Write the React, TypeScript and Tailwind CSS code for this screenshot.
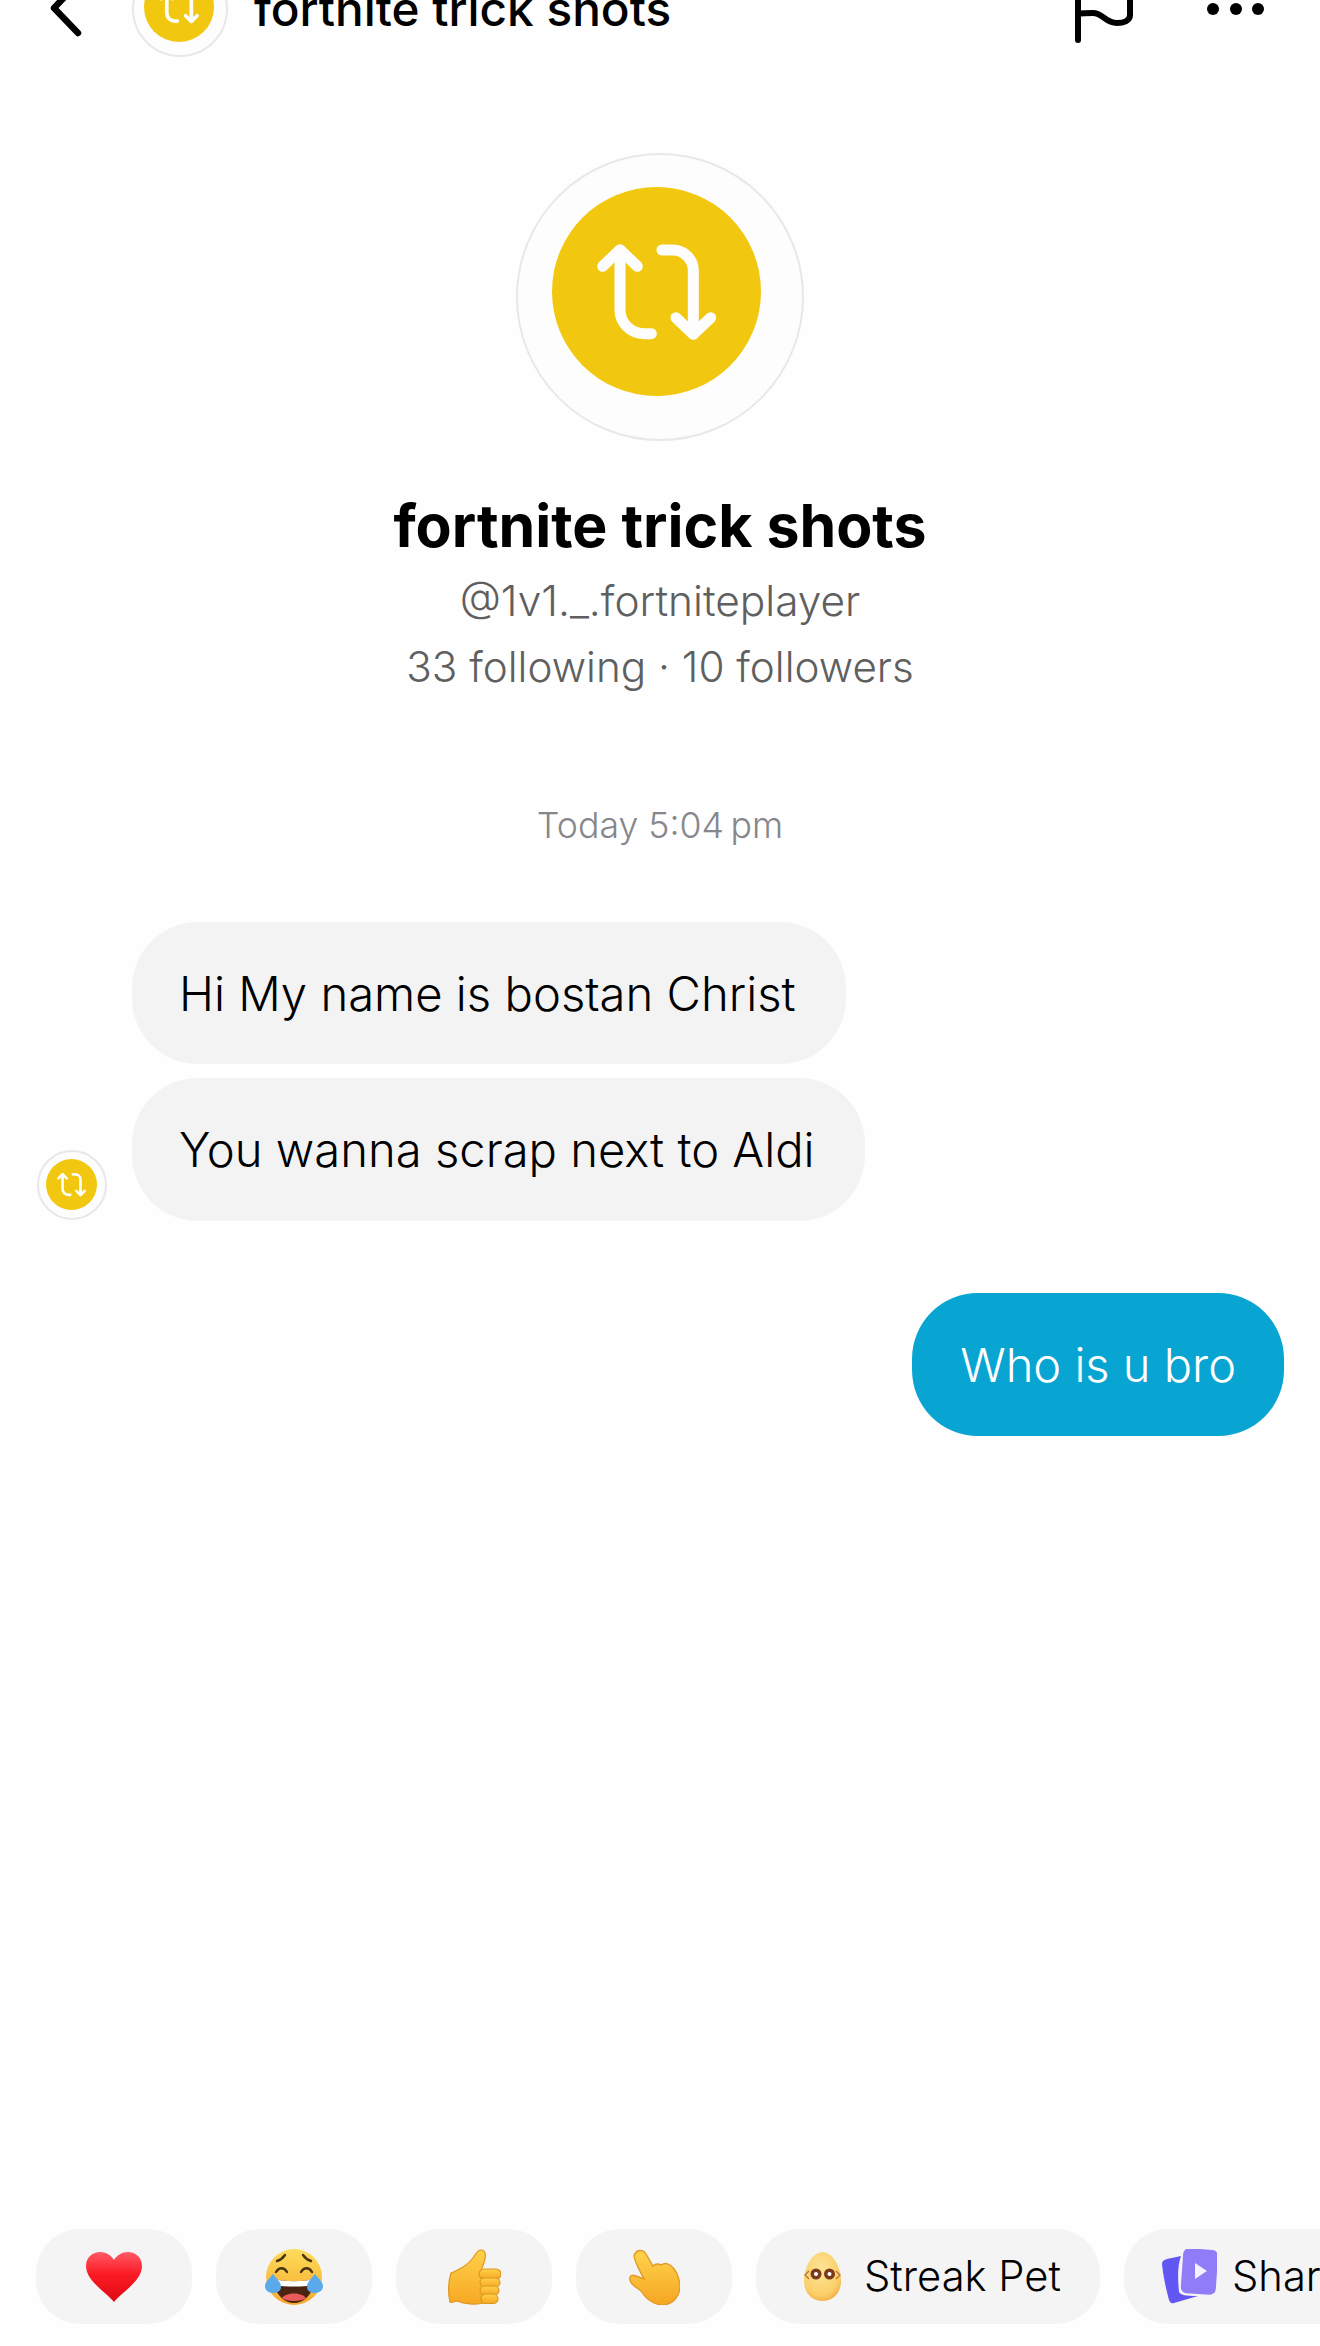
import React from 'react'

const font = { fontFamily: 'Inter, "Liberation Sans", sans-serif' }

function RepostIcon() {
  return (
    <svg viewBox="0 0 627 627" className="w-full h-full">
      <circle cx="313.5" cy="313.5" r="313.5" fill="#f1c80f" />
      <g fill="none" stroke="#fdfdfd" strokeWidth="33" strokeLinecap="round" strokeLinejoin="round">
        <path d="M204 190V368a72 72 0 0 0 72 72H298" />
        <path d="M152 238L204 188L256 238" />
        <path d="M330 189H362a62 62 0 0 1 62 62V440" />
        <path d="M372 392L424 442L476 392" />
      </g>
    </svg>
  )
}

function Avatar({ outer, inner, pad }: { outer: string; inner: string; pad: string }) {
  return (
    <div className={`${outer} ${pad} shrink-0 box-border rounded-full border-2 border-[#e8e8ea] bg-[#fdfdfd] flex items-center justify-center`}>
      <div className={inner}>
        <RepostIcon />
      </div>
    </div>
  )
}

function Heart() {
  return (
    <svg viewBox="0 0 56 50" className="w-[56px] h-[50px]">
      <defs>
        <linearGradient id="heart" x1="0" y1="0" x2="0" y2="1">
          <stop offset="0" stopColor="#ff5a66" />
          <stop offset="0.45" stopColor="#fb1a24" />
          <stop offset="1" stopColor="#dd0a12" />
        </linearGradient>
      </defs>
      <path d="M28 50C21 41 0 29 0 14C0 5 7 0 14 0C20 0 25 3 28 8C31 3 36 0 42 0C49 0 56 5 56 14C56 29 35 41 28 50Z" fill="url(#heart)" />
    </svg>
  )
}

function Laugh() {
  return (
    <svg viewBox="0 0 58 56" className="w-[58px] h-[56px]">
      <defs>
        <linearGradient id="face" x1="0" y1="0" x2="0" y2="1">
          <stop offset="0" stopColor="#fedc5a" />
          <stop offset="1" stopColor="#f6a92c" />
        </linearGradient>
      </defs>
      <circle cx="29" cy="28" r="28" fill="url(#face)" />
      <g fill="none" stroke="#4a3312" strokeWidth="2.4" strokeLinecap="round">
        <path d="M12 12C15 11 18 9 20 6" />
        <path d="M46 12C43 11 40 9 38 6" />
        <path d="M11 23C14 18 19 18 22 23" />
        <path d="M36 23C39 18 44 18 47 23" />
      </g>
      <path d="M9 30C20 33 38 33 49 30C49 44 40 54 29 54C18 54 9 44 9 30Z" fill="#4a2410" />
      <path d="M9 30C20 33 38 33 49 30L48 36C38 38 20 38 10 36Z" fill="#fff" />
      <path d="M17 49C21 43 37 43 41 49C37 53 21 53 17 49Z" fill="#ea5a5a" />
      <path d="M8 25C12 30 16 33 16 38C16 42 12 44 8 44C3 44 0 41 0 37C0 33 5 29 8 25Z" fill="#5aa9ea" />
      <path d="M50 25C46 30 42 33 42 38C42 42 46 44 50 44C55 44 58 41 58 37C58 33 53 29 50 25Z" fill="#5aa9ea" />
    </svg>
  )
}

function Thumb() {
  return (
    <svg viewBox="0 0 53 56" className="w-[53px] h-[56px]">
      <defs>
        <linearGradient id="thumb" x1="0" y1="0" x2="0" y2="1">
          <stop offset="0" stopColor="#ffd14a" />
          <stop offset="1" stopColor="#f7a823" />
        </linearGradient>
      </defs>
      <g stroke="#dd9622" strokeWidth="1.2" fill="url(#thumb)">
        <path d="M3 24C10 21 18 18 25 9C28 5 29 1 33 1C37 1 38 5 37 10C36 15 34 19 33 22L36 54C28 56 16 55 9 52C6 53 3 54 2 53C0 45 0 33 3 24Z" />
        <rect x="31" y="20" width="22" height="10" rx="5" />
        <rect x="32" y="29" width="20" height="9" rx="4.5" />
        <rect x="32" y="37" width="19" height="9" rx="4.5" />
        <rect x="33" y="45" width="17" height="9.5" rx="4.7" />
      </g>
    </svg>
  )
}

function Point() {
  return (
    <svg viewBox="0 0 51 56" className="w-[51px] h-[56px]">
      <defs>
        <linearGradient id="point" x1="0" y1="0" x2="0" y2="1">
          <stop offset="0" stopColor="#ffd44c" />
          <stop offset="1" stopColor="#f6a522" />
        </linearGradient>
      </defs>
      <path
        d="M5 7C7 0 14 0 17 5L24 17C27 14 30 15 32 16C35 14 38 14 41 16C46 19 50 27 51 36C51 46 46 54 35 56C24 56 17 50 12 42C8 38 2 37 1 31C0 27 3 25 7 27L15 30C11 22 6 14 5 7Z"
        fill="url(#point)"
        stroke="#e09a25"
        strokeWidth="1.4"
      />
    </svg>
  )
}

function Egg() {
  return (
    <svg viewBox="0 0 39 49" className="w-[39px] h-[49px] shrink-0">
      <defs>
        <radialGradient id="egg" cx="0.45" cy="0.35" r="0.75">
          <stop offset="0" stopColor="#fde596" />
          <stop offset="0.7" stopColor="#fbcf69" />
          <stop offset="1" stopColor="#eca33a" />
        </radialGradient>
      </defs>
      <path d="M19.5 0C29 0 38 14 38 29C38 41 30 49 19.5 49C9 49 1 41 1 29C1 14 10 0 19.5 0Z" fill="url(#egg)" />
      <circle cx="13" cy="22" r="5.5" fill="#7c3a1c" />
      <circle cx="26.5" cy="22" r="5.5" fill="#7c3a1c" />
      <circle cx="13" cy="22" r="2" fill="#fff" />
      <circle cx="26.5" cy="22" r="2" fill="#fff" />
      <path d="M6 19L2 23L6 27M33 19L37 23L33 27" fill="none" stroke="#b6762f" strokeWidth="1.3" />
    </svg>
  )
}

function ShareCards() {
  return (
    <svg viewBox="0 0 55 55" className="w-[55px] h-[55px] shrink-0">
      <path d="M5 10L19 7C15 18 16 32 17 43C19 46 23 47 36 47L12 54C9 55 8 53 7 51C4 40 1 26 0 15C0 12 2 11 5 10Z" fill="#6257f5" />
      <rect x="20" y="0" width="35" height="45" rx="6" transform="rotate(4 37 22)" fill="#8f7cf6" />
      <path d="M33 14L45 22L33 30Z" fill="#f3f0ff" strokeLinejoin="round" />
    </svg>
  )
}

export default function App() {
  return (
    <div className="w-[1320px] h-[2346px] bg-[#fefefe] overflow-hidden flex flex-col text-black" style={font}>
      {/* Header, cut off by the top of the picture */}
      <div className="h-[96px] -mt-[39px] shrink-0 flex items-center pl-[48px] pr-[55px]">
        <svg viewBox="0 0 40 96" className="w-[40px] h-[96px] shrink-0">
          <path d="M30 22L6 47L30 72" fill="none" stroke="#000" strokeWidth="6.5" strokeLinecap="round" strokeLinejoin="round" />
        </svg>
        <div className="ml-[44px]">
          <Avatar outer="w-[96px] h-[96px]" inner="w-[70px] h-[70px]" pad="pb-[4px] pr-[2px]" />
        </div>
        <div className="ml-[26px] text-[47.7px] leading-[56px] font-medium">fortnite trick shots</div>
        <svg viewBox="0 0 60 96" className="ml-auto w-[60px] h-[96px] shrink-0">
          <path d="M3 79V0M3 53C8 52 12 52 18 52C28 52 30 62 42 62C48 62 55 60 55 54V0" fill="none" stroke="#000" strokeWidth="6" strokeLinecap="round" />
        </svg>
        <svg viewBox="0 0 60 12" className="ml-[70px] w-[60px] h-[12px] shrink-0">
          <circle cx="8" cy="6" r="6" fill="#000" />
          <circle cx="31" cy="6" r="6" fill="#000" />
          <circle cx="53" cy="6" r="6" fill="#000" />
        </svg>
      </div>

      {/* Profile */}
      <div className="flex flex-col items-center shrink-0">
        <div className="mt-[96px]">
          <Avatar outer="w-[288px] h-[288px]" inner="w-[209px] h-[209px]" pad="pb-[12px] pr-[7px]" />
        </div>
        <div className="mt-[53px] text-[59px] leading-[64px] font-bold">fortnite trick shots</div>
        <div className="mt-[10px] text-[42.4px] leading-[66px] font-[350] text-[#5f5f60]">@1v1._.fortniteplayer</div>
        <div className="text-[42.2px] leading-[66px] font-[350] text-[#5f5f60]">33 following · 10 followers</div>
        <div className="mt-[100px] text-[35.7px] leading-[50px] font-[350] text-[#86878a]">Today 5:04{'\u2009'}pm</div>
      </div>

      {/* Messages */}
      <div className="mt-[72px] flex items-end shrink-0 pl-[37px]">
        <div className="mb-[1px]">
          <Avatar outer="w-[70px] h-[70px]" inner="w-[51px] h-[51px]" pad="pb-[2px] pr-[1px]" />
        </div>
        <div className="ml-[25px] flex flex-col items-start gap-[14px]">
          <div className="h-[142px] pl-[47px] pr-[50px] pt-[2px] flex items-center rounded-[66px] bg-[#f3f3f4] text-[47.2px] font-[350]">Hi My name is bostan Christ</div>
          <div className="h-[143px] pl-[47px] pr-[50px] pt-[2px] flex items-center rounded-[66px] bg-[#f3f3f4] text-[47.2px] font-[350]">You wanna scrap next to Aldi</div>
        </div>
      </div>
      <div className="mt-[72px] self-end mr-[36px] h-[143px] px-[48px] pt-[2px] flex items-center rounded-[66px] bg-[#08a5d2] text-white text-[47px] font-[350] shrink-0">
        Who is u bro
      </div>

      {/* Suggestions */}
      <div className="mt-auto mb-[22px] pl-[36px] flex gap-[24px] shrink-0">
        <div className="w-[156px] h-[95px] shrink-0 rounded-[44px] bg-[#f4f4f5] flex items-center justify-center"><Heart /></div>
        <div className="w-[156px] h-[95px] shrink-0 rounded-[44px] bg-[#f4f4f5] flex items-center justify-center"><Laugh /></div>
        <div className="w-[156px] h-[95px] shrink-0 rounded-[44px] bg-[#f4f4f5] flex items-center justify-center"><Thumb /></div>
        <div className="w-[156px] h-[95px] shrink-0 rounded-[44px] bg-[#f4f4f5] flex items-center justify-center"><Point /></div>
        <div className="w-[344px] h-[95px] shrink-0 rounded-[44px] bg-[#f4f4f5] flex items-center pl-[47px] gap-[22px] text-[41.7px] font-[350]">
          <Egg />
          <span>Streak Pet</span>
        </div>
        <div className="h-[95px] shrink-0 rounded-[44px] bg-[#f4f4f5] flex items-center pl-[38px] pr-[38px] gap-[15px] text-[41.7px] font-[350]">
          <ShareCards />
          <span>Share post</span>
        </div>
      </div>
    </div>
  )
}
